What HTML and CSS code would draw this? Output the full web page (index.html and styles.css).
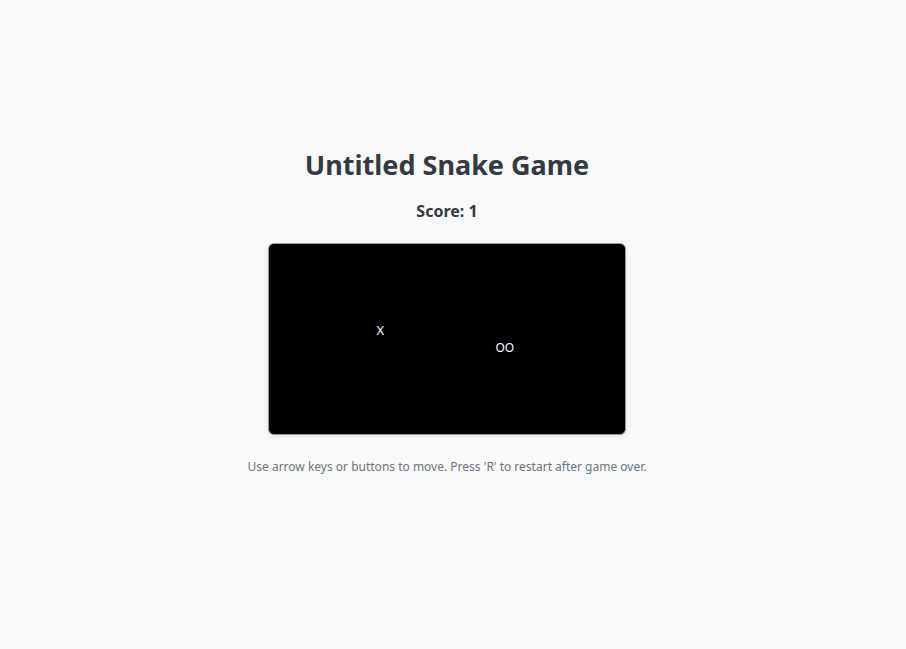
FILE: index.html
```html
<!DOCTYPE html>
<html>
<head>
<meta charset="utf-8">
<title>Untitled Snake Game</title>
<link rel="stylesheet" href="styles.css">
</head>
<body>
<main class="game">
  <h1 class="title">Untitled Snake Game</h1>
  <div class="score">Score: 1</div>
  <div class="board">
    <div class="field">
      <div class="line">X</div>
      <div class="line line-snake">OO</div>
    </div>
  </div>
  <p class="hint">Use arrow keys or buttons to move. Press 'R' to restart after game over.</p>
</main>
</body>
</html>
```
FILE: styles.css
```css
html, body {
  margin: 0;
  padding: 0;
}
body {
  background: #f8f9fa;
  font-family: "Noto Sans", "Open Sans", sans-serif;
  color: #343a40;
}
.game {
  display: flex;
  flex-direction: column;
  align-items: center;
  padding-top: 148px;
  padding-right: 12px;
}
.title {
  margin: 0;
  font-size: 27px;
  line-height: 34px;
  font-weight: 700;
  color: #343a40;
}
.score {
  margin-top: 19px;
  font-size: 16px;
  line-height: 20px;
  font-weight: 700;
  color: #343a40;
}
.board {
  margin-top: 22px;
  width: 356px;
  height: 190px;
  background: #000;
  border: 1px solid #9a9a9a;
  border-radius: 6px;
  box-shadow: 0 2px 6px rgba(0,0,0,0.08);
  display: flex;
  align-items: center;
  justify-content: center;
}
.field {
  width: 141px;
  color: #fff;
  font-size: 13px;
  line-height: 17px;
}
.line-snake {
  padding-left: 119px;
  font-size: 12px;
}
.hint {
  margin: 23px 0 0;
  font-size: 12px;
  line-height: 18px;
  color: #6c757d;
}
```
